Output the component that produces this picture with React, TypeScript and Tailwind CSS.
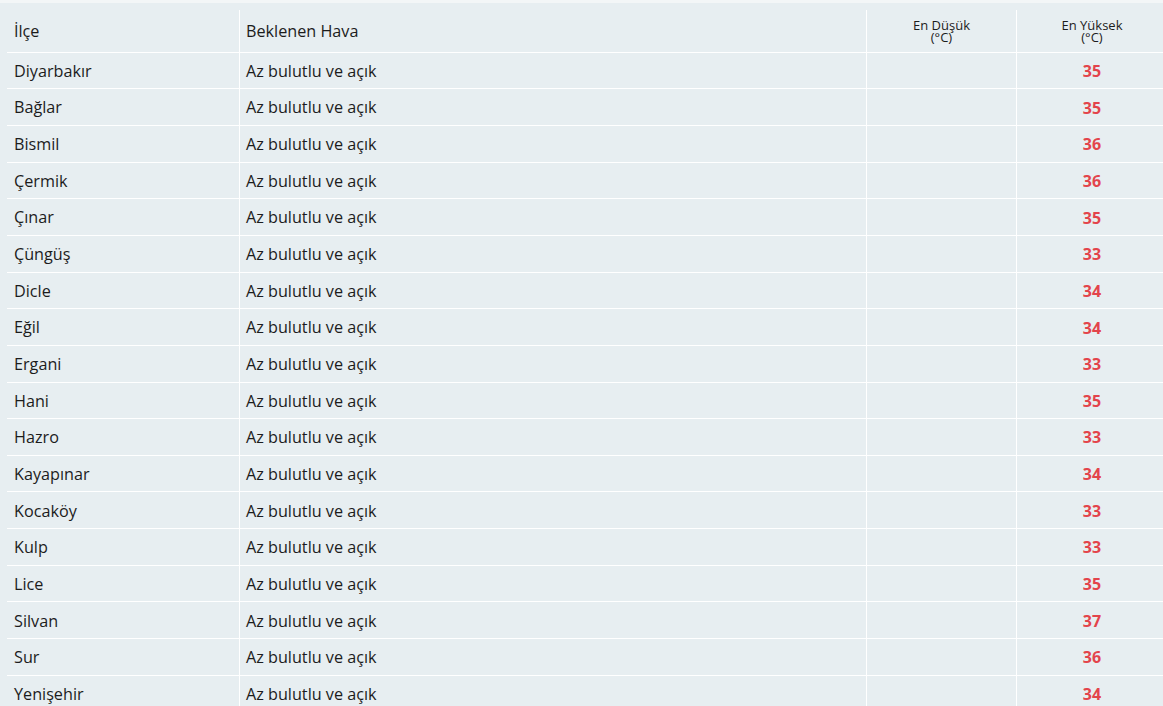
import React from "react";

const rows: [string, number][] = [
  ["Diyarbakır", 35],
  ["Bağlar", 35],
  ["Bismil", 36],
  ["Çermik", 36],
  ["Çınar", 35],
  ["Çüngüş", 33],
  ["Dicle", 34],
  ["Eğil", 34],
  ["Ergani", 33],
  ["Hani", 35],
  ["Hazro", 33],
  ["Kayapınar", 34],
  ["Kocaköy", 33],
  ["Kulp", 33],
  ["Lice", 35],
  ["Silvan", 37],
  ["Sur", 36],
  ["Yenişehir", 34],
];

export default function App() {
  return (
    <div
      className="w-[1163px] h-[706px] overflow-hidden bg-[#f3f6f7] pt-[3px] text-[#1c1c1c]"
      style={{ fontFamily: '"Open Sans", "Noto Sans", sans-serif' }}
    >
      <div className="h-full w-[1200px] bg-[#e7eef1] pl-[7px] pt-[7px]">
        <div className="flex h-[42.6px] border-b border-white">
          <div className="w-[232px] px-[7px] flex items-center text-[16.2px]">İlçe</div>
          <div className="w-[627px] border-l border-white pl-[6px] flex items-center text-[16.2px]">
            Beklenen Hava
          </div>
          <div className="w-[150px] border-l border-white flex flex-col items-center justify-center text-[13px] leading-[12px]">
            <span>En Düşük</span>
            <span>(°C)</span>
          </div>
          <div className="w-[151px] border-l border-white flex flex-col items-center justify-center text-[13px] leading-[12px]">
            <span>En Yüksek</span>
            <span>(°C)</span>
          </div>
        </div>
        {rows.map(([name, max]) => (
          <div key={name} className="flex h-[36.667px] border-b border-white">
            <div className="w-[232px] px-[7px] pt-[1px] flex items-center text-[16.2px]">{name}</div>
            <div className="w-[627px] border-l border-white pl-[6px] pt-[1px] flex items-center text-[16.2px]">
              Az bulutlu ve açık
            </div>
            <div className="w-[150px] border-l border-white"></div>
            <div className="w-[151px] border-l border-white pt-[1px] flex items-center justify-center text-[16px] font-bold text-[#e3444b]">
              {max}
            </div>
          </div>
        ))}
      </div>
    </div>
  );
}
